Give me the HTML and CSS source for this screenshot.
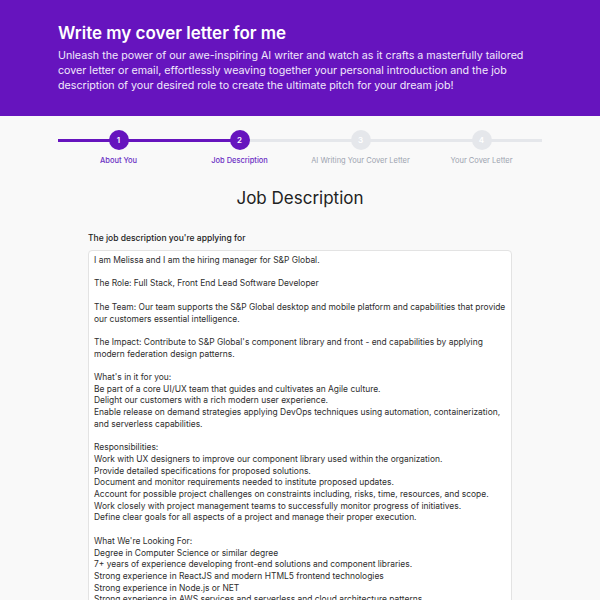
FILE: index.html
```html
<!DOCTYPE html>
<html>
<head>
<meta charset="utf-8">
<link rel="stylesheet" href="styles.css">
</head>
<body>
<header class="hero">
  <h1 class="hero-title">Write my cover letter for me</h1>
  <p class="hero-text">Unleash the power of our awe-inspiring AI writer and watch as it crafts a masterfully tailored cover letter or email, effortlessly weaving together your personal introduction and the job description of your desired role to create the ultimate pitch for your dream job!</p>
</header>
<main class="content">
  <ol class="stepper">
    <li class="step done"><span class="dot">1</span><span class="label">About You</span></li>
    <li class="step current"><span class="dot">2</span><span class="label">Job Description</span></li>
    <li class="step"><span class="dot">3</span><span class="label">AI Writing Your Cover Letter</span></li>
    <li class="step"><span class="dot">4</span><span class="label">Your Cover Letter</span></li>
  </ol>
  <h2 class="section-title">Job Description</h2>
  <div class="field">
    <label class="field-label">The job description you're applying for</label>
    <div class="textbox">I am Melissa and I am the hiring manager for S&amp;P Global.

The Role: Full Stack, Front End Lead Software Developer

The Team: Our team supports the S&amp;P Global desktop and mobile platform and capabilities that provide our customers essential intelligence.

The Impact: Contribute to S&amp;P Global's component library and front - end capabilities by applying modern federation design patterns.

What's in it for you:
Be part of a core UI/UX team that guides and cultivates an Agile culture.
Delight our customers with a rich modern user experience.
Enable release on demand strategies applying DevOps techniques using automation, containerization, and serverless capabilities.

Responsibilities:
Work with UX designers to improve our component library used within the organization.
Provide detailed specifications for proposed solutions.
Document and monitor requirements needed to institute proposed updates.
Account for possible project challenges on constraints including, risks, time, resources, and scope.
Work closely with project management teams to successfully monitor progress of initiatives.
Define clear goals for all aspects of a project and manage their proper execution.

What We're Looking For:
Degree in Computer Science or similar degree
7+ years of experience developing front-end solutions and component libraries.
Strong experience in ReactJS and modern HTML5 frontend technologies
Strong experience in Node.js or NET
Strong experience in AWS services and serverless and cloud architecture patterns
Experience with CI/CD pipelines and automated testing</div>
  </div>
</main>
</body>
</html>
```
FILE: styles.css
```css
* { box-sizing: border-box; }
html, body { margin: 0; padding: 0; }
body {
  background: #f9f9f9;
  font-family: Inter, "Noto Sans", sans-serif;
  color: #222;
}
.hero {
  background: #6614be;
  color: #fff;
  padding: 22px 58px 0 58px;
  height: 116px;
}
.hero-title {
  margin: 0;
  font-size: 17px;
  font-weight: 600;
  line-height: 22px;
}
.hero-text {
  margin: 4px 0 0 0;
  font-size: 10.7px;
  line-height: 15px;
  max-width: 480px;
  color: #f1e8fb;
}
.content {
  padding: 0 58px;
}
.stepper {
  list-style: none;
  margin: 0;
  padding: 14px 0 0 0;
  display: grid;
  grid-template-columns: repeat(4, 1fr);
}
.step {
  position: relative;
  display: flex;
  flex-direction: column;
  align-items: center;
}
.step::before {
  content: "";
  position: absolute;
  top: 9px;
  left: 0;
  right: 0;
  height: 3px;
  background: #e5e7eb;
}
.step.done::before { background: #6614be; }
.step.current::before { background: linear-gradient(to right, #6614be 50%, #e5e7eb 50%); }
.dot {
  position: relative;
  width: 20px;
  height: 20px;
  border-radius: 50%;
  background: #e5e7eb;
  color: #fff;
  font-size: 8px;
  font-weight: 600;
  display: flex;
  align-items: center;
  justify-content: center;
}
.step.done .dot, .step.current .dot { background: #6614be; }
.label {
  margin-top: 6px;
  font-size: 7.5px;
  color: #9ca3af;
}
.step.done .label, .step.current .label { color: #6b2fc4; font-weight: 500; }
.section-title {
  margin: 22px 0 0 0;
  text-align: center;
  font-size: 17px;
  font-weight: 400;
  line-height: 22px;
  color: #222;
}
.field {
  margin: 23px 30px 0 30px;
}
.field-label {
  display: block;
  font-size: 8.5px;
  font-weight: 500;
  color: #222;
  line-height: 12px;
}
.textbox {
  margin-top: 6px;
  background: #fff;
  border: 1px solid #e3e3e3;
  border-radius: 4px;
  padding: 4px 3px 4px 5px;
  font-size: 8.45px;
  line-height: 11.71px;
  color: #2e2e2e;
  white-space: pre-wrap;
  height: 420px;
  overflow: hidden;
}
```
